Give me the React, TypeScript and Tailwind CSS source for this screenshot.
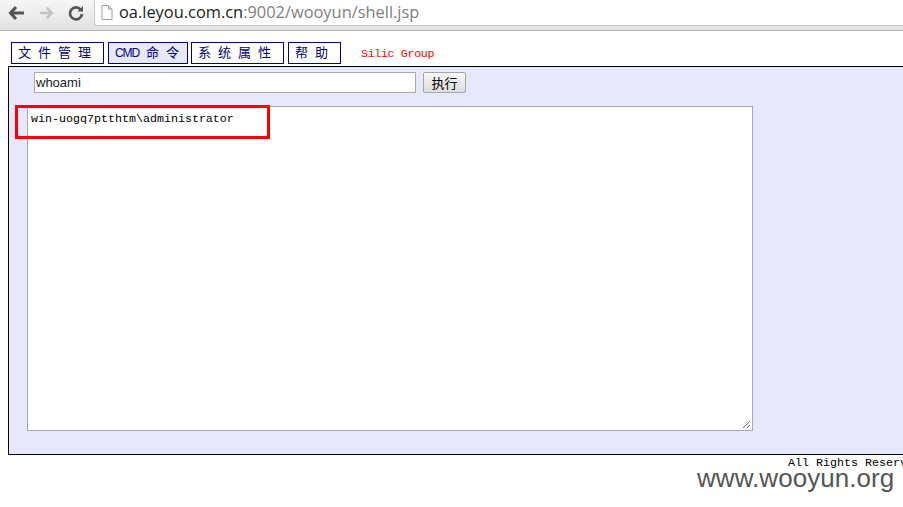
import React from "react";

const mono = "font-['Liberation_Mono','Noto_Sans_CJK_SC',monospace]";

function Tab({ label, prefix, active, width }: { label: string; prefix?: string; active?: boolean; width: string }) {
  return (
    <div
      className={`${width} h-[22px] border border-[#000080] flex items-center pl-[6px] text-[13px] leading-none text-[#000080] whitespace-pre [word-spacing:-0.8px] ${mono} ${active ? "bg-[#e8e8fc]" : "bg-white"}`}
    >
      {prefix ? <span className="font-['Liberation_Sans',sans-serif] text-[12px] tracking-[-1.1px] mr-[7px]">{prefix}</span> : null}
      {label}
    </div>
  );
}

export default function App() {
  return (
    <div className="relative w-[903px] h-[507px] overflow-hidden bg-white font-['Liberation_Sans',sans-serif]">
      <div className="h-[31px] border-b border-[#b4b4b4] bg-gradient-to-b from-[#f6f6f6] to-[#e2e2e2] flex items-start">
        <div className="w-[94px] h-[26px] flex items-center pl-[8px] gap-[12px] shrink-0">
          <svg width="18" height="16" viewBox="0 0 18 16">
            <path d="M8 2 L2.5 8 L8 14 M3 8 H16" fill="none" stroke="#555" strokeWidth="3" />
          </svg>
          <svg width="16" height="16" viewBox="0 0 18 16">
            <path d="M10 2 L15.5 8 L10 14 M15 8 H2" fill="none" stroke="#c4c4c4" strokeWidth="3" />
          </svg>
          <svg width="16" height="16" viewBox="0 0 16 16" className="ml-[2px]">
            <path d="M13 5 A6 6 0 1 0 14 9" fill="none" stroke="#555" strokeWidth="2.6" />
            <path d="M9.5 6.5 H15 V1 Z" fill="#555" />
          </svg>
        </div>
        <div className="flex-1 h-[26px] bg-white border-b border-l border-[#c8c8c8] rounded-bl-[3px] flex items-center pl-[6px] gap-[6px]">
          <svg width="12" height="15" viewBox="0 0 12 15" className="shrink-0">
            <path d="M1 .5 H7.5 L11 4 V14.5 H1 Z M7.5 .5 V4 H11" fill="#fff" stroke="#a0a0a0" />
          </svg>
          <div className="text-[16.4px] leading-none pb-[1px] font-['Open_Sans',sans-serif]">
            <span className="text-[#222]">oa.leyou.com.cn</span>
            <span className="text-[#808080]">:9002/wooyun/shell.jsp</span>
          </div>
        </div>
      </div>

      <div className="flex items-center gap-[4px] pl-[11px] mt-[11px] h-[22px]">
        <Tab width="w-[93px]" label="文 件 管 理" />
        <Tab width="w-[80px]" prefix="CMD" label="命 令" active />
        <Tab width="w-[93px] -ml-[1px]" label="系 统 属 性" />
        <Tab width="w-[53px]" label="帮 助" />
        <span className={`ml-[16px] pt-[4px] text-[11.67px] tracking-[-0.35px] leading-none text-[#ff0000] ${mono}`}>Silic Group</span>
      </div>

      <div className="ml-[8px] mt-[2px] w-[1000px] h-[389px] border border-black bg-[#e8e8fc] pt-[5px]">
        <div className="flex items-center pl-[25px] gap-[7px] h-[21px]">
          <div className="w-[382px] h-[21px] border border-[#a9a9a9] bg-white flex items-center pl-[1px] text-[13px] leading-none text-[#222]">
            whoami
          </div>
          <div className="w-[43px] h-[21px] border border-[#a6a6a6] rounded-[2px] bg-gradient-to-b from-[#f8f8f8] to-[#dddddd] flex items-center justify-center text-[13px] leading-none text-black font-['Noto_Sans_CJK_SC',sans-serif]">
            执行
          </div>
        </div>
        <div className="relative ml-[18px] mt-[13px] w-[726px] h-[325px] border border-[#a9a9a9] bg-white pl-[3px] pt-[5px]">
          <div className={`text-[11.67px] leading-[14px] text-black ${mono}`}>win-uogq7ptthtm\administrator</div>
          <svg width="9" height="9" viewBox="0 0 9 9" className="absolute right-[1px] bottom-[1px]">
            <path d="M1 8 L8 1 M5 8 L8 5" stroke="#777" strokeWidth="1" fill="none" />
          </svg>
        </div>
      </div>

      <div className={`pl-[788px] pt-[1px] whitespace-nowrap text-[11.67px] leading-[14px] text-black ${mono}`}>
        All Rights Reserved
      </div>

      <div className="absolute left-[15px] top-[105px] w-[255px] h-[34px] border-[3px] border-[#ff0000]" />
      <div className="absolute left-[697px] top-[463px] text-[26px] leading-[30px] tracking-[0.05px] text-[#555555] whitespace-nowrap">
        www.wooyun.org
      </div>
    </div>
  );
}
